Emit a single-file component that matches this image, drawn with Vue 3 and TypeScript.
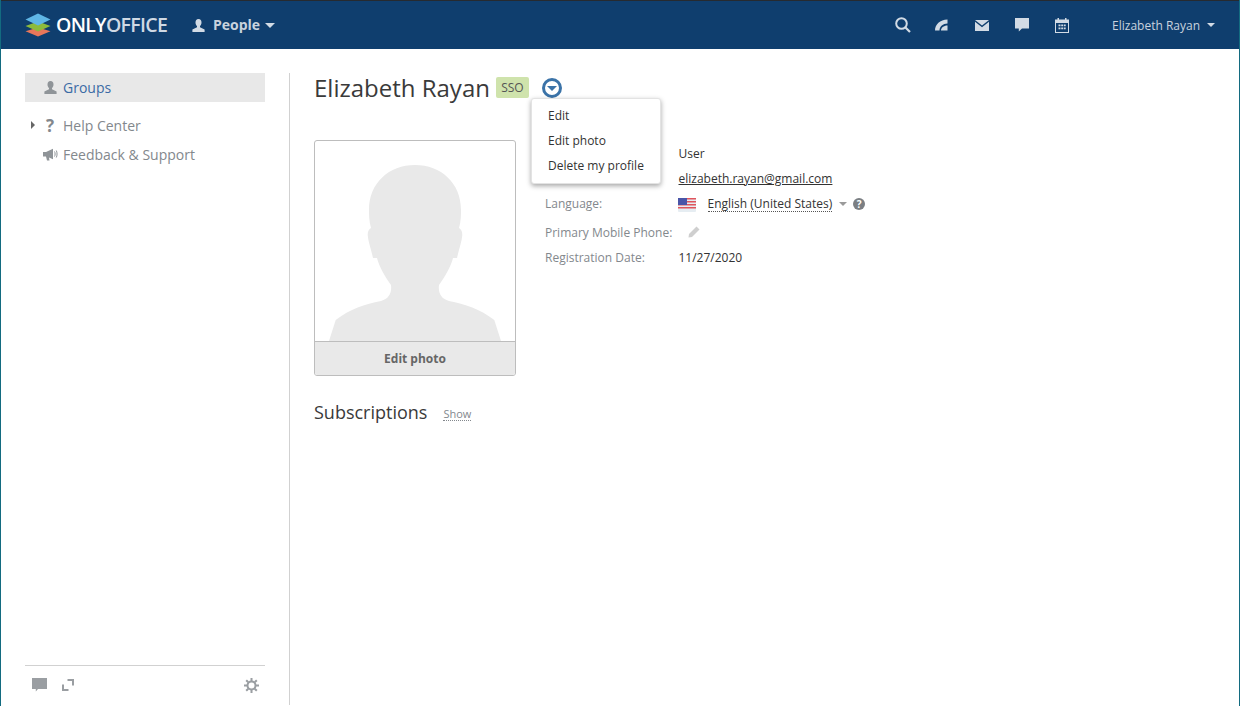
<script setup lang="ts">
interface Row { label: string; value?: string; kind: string }
const rows: Row[] = [
  { label: '', value: 'User', kind: 'text' },
  { label: '', value: 'elizabeth.rayan@gmail.com', kind: 'mail' },
  { label: 'Language:', value: 'English (United States)', kind: 'lang' },
  { label: 'Primary Mobile Phone:', kind: 'phone' },
  { label: 'Registration Date:', value: '11/27/2020', kind: 'text' },
]
const menu: string[] = ['Edit', 'Edit photo', 'Delete my profile']
</script>

<template>
  <div class="app">
    <header class="top">
      <div class="brand">
        <svg class="logo" width="26" height="24" viewBox="0 0 26 24">
          <path d="M13 14.5 25.5 18.2 13 23.6.5 18.2Z" fill="#e8775a" />
          <path d="M13 8.5 25.5 13 13 18.6.5 13Z" fill="#8cbb3c" />
          <path d="M13 .6 25.5 6.4 13 12.6.5 6.4Z" fill="#5fb6e6" />
        </svg>
        <span class="word"><b>ONLY</b><i>OFFICE</i></span>
      </div>
      <div class="module">
        <svg width="13" height="13" viewBox="0 0 13 13"><path d="M6.500 0C8.500 0 9.500 1.400 9.500 3.400 9.500 5 8.800 6.200 8 7V8.200L12.600 10.400V13H.4V10.400L5 8.200V7C4.200 6.200 3.500 5 3.500 3.400 3.500 1.400 4.500 0 6.500 0Z" fill="#d2dbe5" /></svg>
        <span>People</span>
        <i class="caret light"></i>
      </div>
      <div class="spacer"></div>
      <nav class="tools">
        <svg width="16" height="16" viewBox="0 0 16 16"><circle cx="6.500" cy="6.500" r="5.300" fill="none" stroke="#d2dbe5" stroke-width="2" /><path d="M10.500 10.500 15 15" stroke="#d2dbe5" stroke-width="2.200" /></svg>
        <svg width="14" height="12" viewBox="0 0 14 12"><path d="M0 11.500C0 5.500 5 .5 12.500.5V4.500C8 4.500 4.500 7.500 4.500 11.500Z M6 11.500C6 9 8.500 6.500 12.500 6.500V11.500Z" fill="#d2dbe5" /></svg>
        <svg width="14" height="11" viewBox="0 0 14 11"><path d="M0 0H14L7 5.500Z M0 1.800 7 7.200 14 1.800V11H0Z" fill="#d2dbe5" /></svg>
        <svg width="14" height="14" viewBox="0 0 14 14"><path d="M0 0H14V10.500H7L3.800 13.500V10.500H0Z" fill="#d2dbe5" /></svg>
        <svg width="14" height="15" viewBox="0 0 14 15"><path fill-rule="evenodd" d="M0 1.500H2.500V0H4V1.500H10V0H11.500V1.500H14V15H0ZM1 5V14H13V5ZM3.500 6.500H5.500V8.200H3.500ZM6.200 6.500H8V8.200H6.200ZM8.700 6.500H10.700V8.200H8.700ZM3.500 9.500H5.500V11.200H3.500ZM6.200 9.500H8V11.200H6.200ZM8.700 9.500H10.700V11.200H8.700Z" fill="#d2dbe5" /></svg>
      </nav>
      <div class="user">
        <span>Elizabeth Rayan</span>
        <i class="caret light small"></i>
      </div>
    </header>

    <div class="body">
      <aside class="side">
        <div class="side-top">
          <div class="item active">
            <span class="ic">
              <svg width="13" height="13" viewBox="0 0 13 13"><path d="M6.500 0C8.500 0 9.500 1.400 9.500 3.400 9.500 5 8.800 6.200 8 7V8.200L12.600 10.400V13H.4V10.400L5 8.200V7C4.200 6.200 3.500 5 3.500 3.400 3.500 1.400 4.500 0 6.500 0Z" fill="#8f9498" /></svg>
            </span>
            <span class="blue">Groups</span>
          </div>
          <div class="item help">
            <i class="tri"></i>
            <span class="ic q">?</span>
            <span>Help Center</span>
          </div>
          <div class="item feedback">
            <span class="ic">
              <svg width="15" height="13" viewBox="0 0 15 13"><path d="M0 4H3L10 .8V11.200L6 9.500 6.500 12.500H4L3 8.500H0Z" fill="#8f9498" /><path d="M11.500 3.500C12.300 4.800 12.300 7.200 11.500 8.500M13.300 2.500C14.300 4.500 14.300 7.500 13.300 9.500" stroke="#8f9498" fill="none" /></svg>
            </span>
            <span>Feedback &amp; Support</span>
          </div>
        </div>
        <div class="side-foot">
          <svg width="15" height="14" viewBox="0 0 15 14"><path d="M0 0H15V11H6L3.800 13.500V11H0Z" fill="#9a9ea2" /></svg>
          <svg class="expand" width="12" height="12" viewBox="0 0 12 12"><path d="M5.500 1H11V6.500M1 5.500V11H6.500" fill="none" stroke="#9a9ea2" stroke-width="2" /></svg>
          <span class="spacer"></span>
          <svg width="15" height="15" viewBox="0 0 15 15"><circle cx="7.500" cy="7.500" r="4" fill="none" stroke="#9a9ea2" stroke-width="2" /><path d="M7.500 0V3M7.500 12V15M0 7.500H3M12 7.500H15M2.200 2.200 4.300 4.300M10.700 10.700 12.800 12.800M12.800 2.200 10.700 4.300M4.300 10.700 2.200 12.800" stroke="#9a9ea2" stroke-width="2" /></svg>
        </div>
      </aside>

      <main class="main">
        <div class="title-row">
          <h1>Elizabeth Rayan</h1>
          <span class="sso">SSO</span>
          <span class="drop"><i></i></span>
          <ul class="menu">
            <li v-for="m in menu" :key="m">{{ m }}</li>
          </ul>
        </div>

        <div class="profile">
          <div class="photo">
            <div class="pic">
              <svg width="200" height="200" viewBox="0 0 200 200">
                <path d="M14 200 20.700 179C35 168 50 163 66 160 74 158 77 152 76 144 70 136 64 125 62 117H58C56 108 53 100 52.700 94 52.700 90 54 88 56 87 54 80 54 74 54 69 54 42 74 24 100 24 126 24 146 42 146 69 146 74 146 80 144 87 146 88 147.300 90 147.300 94 147 100 144 108 142 117H138C136 125 130 136 124 144 123 152 126 158 134 160 150 163 165 168 179.300 179L186 200Z" fill="#e9e9e9" />
              </svg>
            </div>
            <div class="pic-foot">Edit photo</div>
          </div>

          <div class="info">
            <div v-for="r in rows" :key="r.kind + r.label + r.value" class="row" :class="'row-' + r.kind">
              <span class="lab">{{ r.label }}</span>
              <span v-if="r.kind === 'text'">{{ r.value }}</span>
              <span v-else-if="r.kind === 'mail'" class="mail">{{ r.value }}</span>
              <span v-else-if="r.kind === 'lang'" class="lang">
                <svg class="flag" width="18" height="14" viewBox="0 0 18 14">
                  <rect width="18" height="14" rx="1" fill="#e6edf2" />
                  <path d="M0 0H18V1.500H0ZM0 3H18V4.500H0ZM0 6H18V7.500H0ZM0 9H18V10.500H0Z" fill="#e0555c" />
                  <rect width="9" height="7" fill="#4a55a8" />
                </svg>
                <span class="dotted">{{ r.value }}</span>
                <i class="caret grey"></i>
                <span class="qm">?</span>
              </span>
              <svg v-else-if="r.kind === 'phone'" class="pen" width="12" height="12" viewBox="0 0 12 12"><path d="M8.500.5 11.500 3.500 4 11 .5 11.500 1 8Z" fill="#cfcfcf" /></svg>
            </div>
          </div>
        </div>

        <div class="subs">
          <h2>Subscriptions</h2>
          <span class="show">Show</span>
        </div>
      </main>
    </div>
  </div>
</template>

<style>
html, body { margin: 0; background: #fff; overflow: hidden; }
</style>

<style scoped>
.app {
  box-sizing: border-box;
  height: 708px;
  padding-bottom: 3px;
  display: flex;
  flex-direction: column;
  font-family: "Open Sans", "DejaVu Sans", sans-serif;
  font-size: 12px;
  color: #333;
  background: #fff;
  position: relative;
}
.app::before, .app::after { content: ""; position: absolute; top: 0; bottom: 2px; width: 1px; background: #136b80; }
.app::before { left: 0; }
.app::after { right: 0; }
.top {
  height: 48px;
  margin-top: 1px;
  padding: 0 1px;
  background: #0f3e6e;
  display: flex;
  align-items: center;
  box-shadow: 0 -1px 0 #262a30;
  flex: none;
}
.brand { display: flex; align-items: center; margin-left: 24px; width: 167px; }
.word { margin-left: 5px; font-size: 19.500px; letter-spacing: -.7px; line-height: 24px; }
.word b { color: #fff; font-weight: 600; }
.word i { color: #cfd9e4; font-style: normal; font-weight: 600; }
.module { display: flex; align-items: center; color: #c9d3de; font-size: 14px; font-weight: 700; }
.module span { margin-left: 8px; position: relative; top: -1px; }
.caret { display: inline-block; width: 0; height: 0; border-style: solid; border-color: transparent; border-width: 5px 5px 0; }
.caret.light { border-top-color: #d2dbe5; margin-left: 5px; }
.caret.small { border-width: 4px 4px 0; margin-left: 7px; }
.caret.grey { border-width: 4px 4px 0; border-top-color: #9a9a9a; margin-left: 7px; }
.spacer { flex: 1; }
.tools { display: flex; align-items: center; gap: 25px; }
.tools svg:nth-child(2) { margin-left: -1px; }
.tools svg:nth-child(3), .tools svg:nth-child(4), .tools svg:nth-child(5) { margin-left: 1px; }
.user { display: flex; align-items: center; margin-left: 43px; margin-right: 24px; color: #c9d3de; font-size: 12px; }
.body { flex: 1; display: flex; padding-top: 24px; min-height: 0; }
.side { width: 240px; margin-left: 25px; display: flex; flex-direction: column; font-size: 14px; color: #83888d; flex: none; }
.side-top { flex: 1; }
.item { display: flex; align-items: center; height: 29px; position: relative; padding-left: 15px; }
.ic { width: 20px; margin-right: 3px; flex: none; display: flex; align-items: center; justify-content: center; }
.ic svg { flex: none; display: block; }
.item.active { background: #e8e8e8; margin-bottom: 9px; }
.blue { color: #3b6ba5; }
.q { font-weight: 700; font-size: 17px; color: #83888d; }
.tri { position: absolute; left: 6px; top: 10px; width: 0; height: 0; border-style: solid; border-color: transparent transparent transparent #666; border-width: 4px 0 4px 4px; }
.side-foot { height: 38px; border-top: 1px solid #d1d1d1; display: flex; align-items: center; padding: 0 6px 1px 7px; }
.expand { margin-left: 15px; }
.main { flex: 1; margin-left: 24px; border-left: 1px solid #d1d1d1; padding-left: 24px; }
.title-row { display: flex; align-items: center; height: 31px; position: relative; }
h1 { margin: 0; font-size: 24px; font-weight: 400; color: #3a3a3a; line-height: 29px; align-self: flex-start; }
.sso { margin-left: 6px; background: #cfe3ac; color: #555; font-size: 12px; width: 33px; height: 21px; line-height: 21px; text-align: center; border-radius: 2px; margin-top: -2px; }
.drop { margin-left: 13px; box-sizing: border-box; width: 20px; height: 20px; border: 3px solid #3b73a8; border-radius: 50%; display: flex; align-items: center; justify-content: center; margin-top: -1px; }
.drop i { width: 0; height: 0; border-style: solid; border-color: #3b73a8 transparent transparent; border-width: 5px 5px 0; }
.menu { position: absolute; left: 217px; top: 25px; margin: 0; padding: 4px 0 5px; list-style: none; width: 130px; box-sizing: border-box; background: #fff; border: 1px solid #e3e3e3; border-radius: 3px; box-shadow: 0 2px 5px rgba(0, 0, 0, .35); z-index: 2; font-size: 12px; color: #333; }
.menu li { height: 25px; line-height: 25px; padding-left: 16px; white-space: nowrap; }
.profile { display: flex; margin-top: 36px; }
.photo { box-sizing: border-box; width: 202px; height: 236px; border: 1px solid #bdbdbd; border-radius: 3px; display: flex; flex-direction: column; overflow: hidden; }
.pic { height: 200px; flex: none; }
.pic svg { display: block; }
.pic-foot { flex: 1; border-top: 1px solid #bdbdbd; background: #e9e9e9; color: #666; font-weight: 700; text-align: center; line-height: 33px; font-size: 12px; }
.info { margin-left: 29px; margin-top: 1px; }
.row { display: flex; align-items: center; height: 25px; }
.row-phone { margin-top: 4px; }
.lab { width: 133.500px; flex: none; color: #83888d; white-space: nowrap; }
.mail { text-decoration: underline; color: #333; }
.lang { display: flex; align-items: center; }
.flag { margin-right: 11.500px; margin-left: -.500px; margin-top: 3px; }
.dotted { border-bottom: 1px dotted #555; line-height: 15px; }
.qm { margin-left: 6px; width: 12px; height: 12px; border-radius: 50%; background: #7b7f83; color: #fff; font-size: 10px; font-weight: 700; line-height: 12px; text-align: center; }
.pen { margin-left: 9px; margin-top: -2px; }
.subs { display: flex; align-items: center; margin-top: 23px; }
h2 { margin: 0; font-size: 18px; font-weight: 400; color: #3a3a3a; line-height: 26px; }
.show { margin-left: 16px; font-size: 11px; color: #83888d; border-bottom: 1px dotted #83888d; line-height: 13px; margin-top: 3px; }
</style>
